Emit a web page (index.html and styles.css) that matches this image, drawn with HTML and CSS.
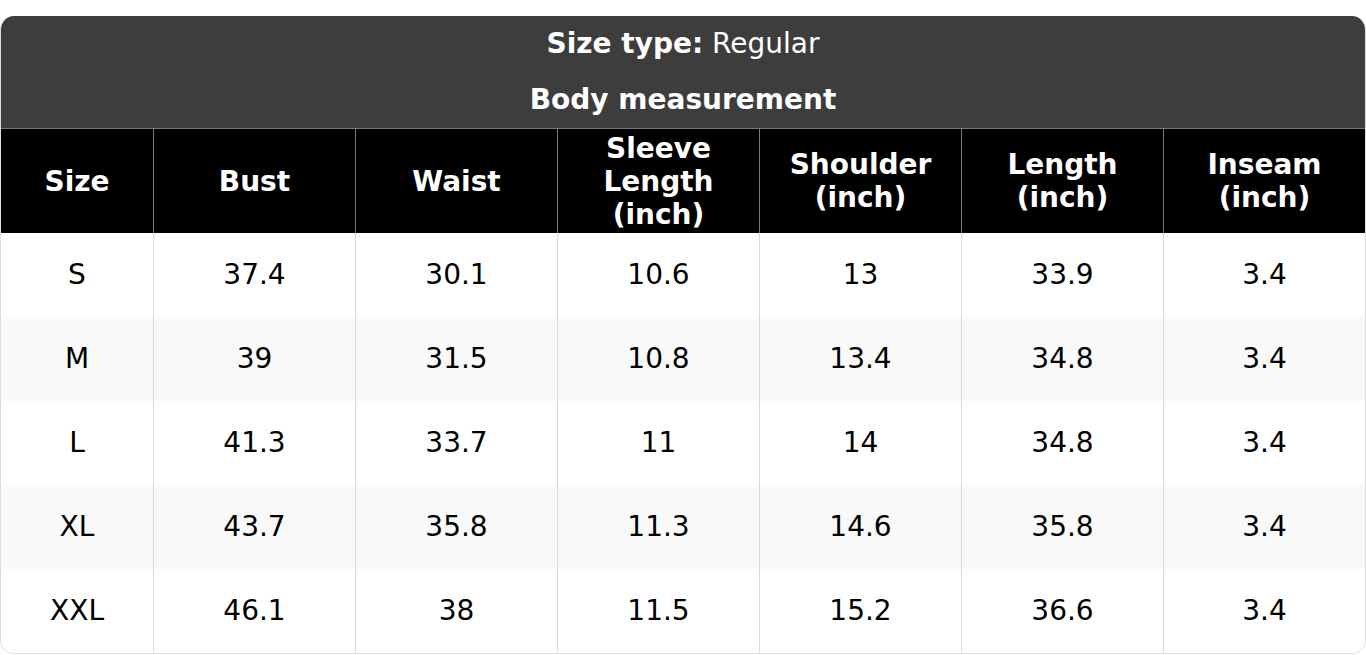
FILE: index.html
```html
<!DOCTYPE html>
<html lang="en">
<head>
<meta charset="utf-8">
<title>Size chart</title>
<link rel="stylesheet" href="styles.css">
</head>
<body>
<div class="card">
  <div class="title">
    <div class="title-line"><span><b>Size type:</b> Regular</span></div>
    <div class="title-line"><b>Body measurement</b></div>
  </div>
  <div class="row head">
    <div class="cell">Size</div>
    <div class="cell">Bust</div>
    <div class="cell">Waist</div>
    <div class="cell">Sleeve<br>Length<br>(inch)</div>
    <div class="cell">Shoulder<br>(inch)</div>
    <div class="cell">Length<br>(inch)</div>
    <div class="cell">Inseam<br>(inch)</div>
  </div>
  <div class="row">
    <div class="cell">S</div><div class="cell">37.4</div><div class="cell">30.1</div><div class="cell">10.6</div><div class="cell">13</div><div class="cell">33.9</div><div class="cell">3.4</div>
  </div>
  <div class="row alt">
    <div class="cell">M</div><div class="cell">39</div><div class="cell">31.5</div><div class="cell">10.8</div><div class="cell">13.4</div><div class="cell">34.8</div><div class="cell">3.4</div>
  </div>
  <div class="row">
    <div class="cell">L</div><div class="cell">41.3</div><div class="cell">33.7</div><div class="cell">11</div><div class="cell">14</div><div class="cell">34.8</div><div class="cell">3.4</div>
  </div>
  <div class="row alt">
    <div class="cell">XL</div><div class="cell">43.7</div><div class="cell">35.8</div><div class="cell">11.3</div><div class="cell">14.6</div><div class="cell">35.8</div><div class="cell">3.4</div>
  </div>
  <div class="row">
    <div class="cell">XXL</div><div class="cell">46.1</div><div class="cell">38</div><div class="cell">11.5</div><div class="cell">15.2</div><div class="cell">36.6</div><div class="cell">3.4</div>
  </div>
</div>
</body>
</html>
```
FILE: styles.css
```css
html, body {
  margin: 0;
  padding: 0;
  background: #ffffff;
}
body {
  padding-top: 16px;
  font-family: "DejaVu Sans", "Liberation Sans", sans-serif;
  font-size: 28px;
  color: #000;
}
.card {
  width: 1366px;
  box-sizing: border-box;
  border: 1px solid #dcdcdc;
  border-top: none;
  border-radius: 14px;
  overflow: hidden;
  background: #fff;
}
.title {
  background: #3d3d3d;
  color: #fff;
  border-bottom: 1px solid #7a7a7a;
}
.title-line {
  height: 56px;
  display: flex;
  align-items: center;
  justify-content: center;
  line-height: 1.2;
}
.title-line b {
  font-weight: bold;
}
.row {
  display: grid;
  grid-template-columns: 152px repeat(6, 1fr);
  height: 84px;
  background: #fff;
}
.row.alt {
  background: #f9f9f9;
}
.cell {
  display: flex;
  align-items: center;
  justify-content: center;
  text-align: center;
  line-height: 1.2;
  border-left: 1px solid #dadada;
}
.cell:first-child {
  border-left: none;
}
.row.head {
  height: 104px;
  background: #000;
  color: #fff;
  font-weight: bold;
}
.row.head .cell {
  border-left-color: #7a7a7a;
  line-height: 33px;
}
```
